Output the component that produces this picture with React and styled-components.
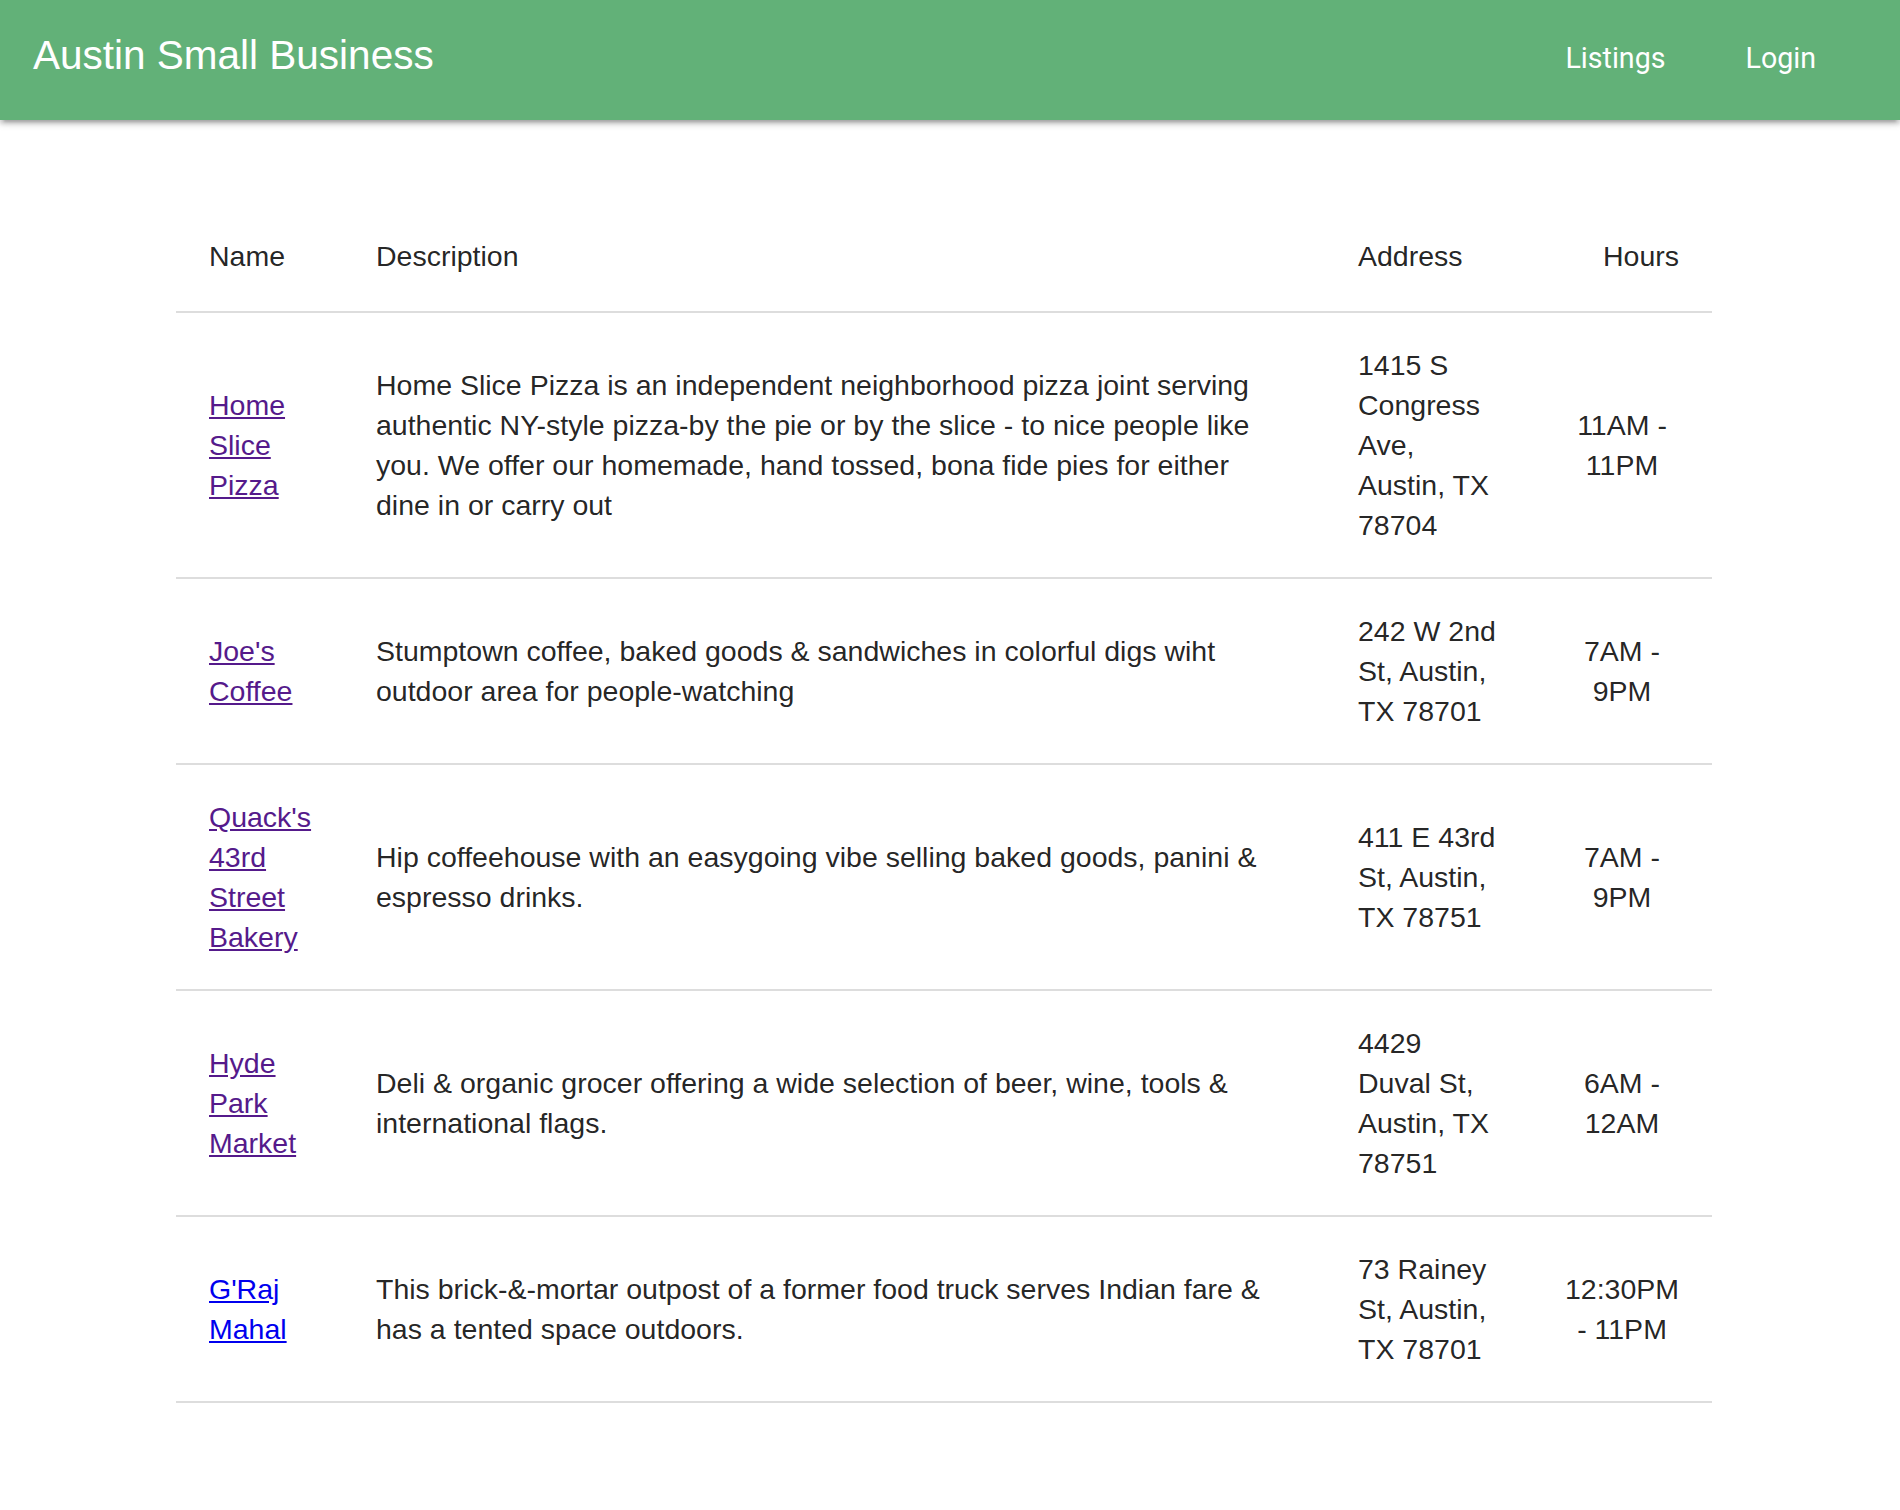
import React from "react";
import styled, { createGlobalStyle } from "styled-components";

const listings = [
  {
    name: "Home Slice Pizza",
    description:
      "Home Slice Pizza is an independent neighborhood pizza joint serving authentic NY-style pizza-by the pie or by the slice - to nice people like you. We offer our homemade, hand tossed, bona fide pies for either dine in or carry out",
    address: "1415 S Congress Ave, Austin, TX 78704",
    hours: "11AM - 11PM",
    visited: true,
  },
  {
    name: "Joe's Coffee",
    description:
      "Stumptown coffee, baked goods & sandwiches in colorful digs wiht outdoor area for people-watching",
    address: "242 W 2nd St, Austin, TX 78701",
    hours: "7AM - 9PM",
    visited: true,
  },
  {
    name: "Quack's 43rd Street Bakery",
    description:
      "Hip coffeehouse with an easygoing vibe selling baked goods, panini & espresso drinks.",
    address: "411 E 43rd St, Austin, TX 78751",
    hours: "7AM - 9PM",
    visited: true,
  },
  {
    name: "Hyde Park Market",
    description:
      "Deli & organic grocer offering a wide selection of beer, wine, tools & international flags.",
    address: "4429 Duval St, Austin, TX 78751",
    hours: "6AM - 12AM",
    visited: true,
  },
  {
    name: "G'Raj Mahal",
    description:
      "This brick-&-mortar outpost of a former food truck serves Indian fare & has a tented space outdoors.",
    address: "73 Rainey St, Austin, TX 78701",
    hours: "12:30PM - 11PM",
    visited: false,
  },
];

const GlobalStyle = createGlobalStyle`
  body {
    margin: 0;
    background: #ffffff;
    font-family: "Liberation Sans", Arial, sans-serif;
    color: rgba(0, 0, 0, 0.87);
  }
`;

const NavBar = styled.nav`
  height: 120px;
  background: #62b178;
  box-shadow: 0 4px 4px 0 rgba(0, 0, 0, 0.14), 0 6px 2px -4px rgba(0, 0, 0, 0.12),
    0 2px 9px 0 rgba(0, 0, 0, 0.2);
  display: flex;
  align-items: center;
  justify-content: space-between;
  padding: 0 44px 0 33px;
  position: relative;
  z-index: 1;
`;

const Brand = styled.a`
  font-family: "Liberation Sans", Arial, sans-serif;
  font-size: 40.5px;
  color: #ffffff;
  text-decoration: none;
  margin-top: -10px;
`;

const NavLinks = styled.ul`
  display: flex;
  list-style: none;
  margin: -4px 0 0;
  padding: 0;
`;

const NavLink = styled.a`
  display: block;
  padding: 0 40px;
  line-height: 120px;
  font-family: Roboto, sans-serif;
  font-size: 28.6px;
  color: #ffffff;
  text-decoration: none;
`;

const Main = styled.main`
  padding: 87px 188px 80px 176px;
`;

const Table = styled.table`
  width: 1536px;
  border-collapse: collapse;
  table-layout: fixed;
  font-size: 28.5px;
  line-height: 40px;
`;

const Col = styled.col`
  width: ${(p) => p.$w}px;
`;

const Row = styled.tr`
  border-bottom: 2px solid #dddddd;
`;

const Head = styled.th`
  font-weight: normal;
  padding: 29px 33px 35px;
  text-align: ${(p) => p.$align || "left"};
  vertical-align: middle;
`;

const Cell = styled.td`
  padding: 32px 33px;
  text-align: ${(p) => p.$align || "left"};
  vertical-align: middle;
`;

const DescCell = styled(Cell)`
  padding-right: 38px;
`;

const NameLink = styled.a`
  color: ${(p) => (p.$visited ? "#551a8b" : "#0000ee")};
  text-decoration: underline;
`;

export default function App() {
  return (
    <>
      <GlobalStyle />
      <NavBar>
        <Brand href="#">Austin Small Business</Brand>
        <NavLinks>
          <li>
            <NavLink href="#">Listings</NavLink>
          </li>
          <li>
            <NavLink href="#">Login</NavLink>
          </li>
        </NavLinks>
      </NavBar>
      <Main>
        <Table>
          <colgroup>
            <Col $w={167} />
            <Col $w={982} />
            <Col $w={207} />
            <Col $w={180} />
          </colgroup>
          <thead>
            <Row>
              <Head>Name</Head>
              <Head>Description</Head>
              <Head>Address</Head>
              <Head $align="right">Hours</Head>
            </Row>
          </thead>
          <tbody>
            {listings.map((item) => (
              <Row key={item.name}>
                <Cell>
                  <NameLink href="#" $visited={item.visited}>
                    {item.name}
                  </NameLink>
                </Cell>
                <DescCell>{item.description}</DescCell>
                <Cell>{item.address}</Cell>
                <Cell $align="center">{item.hours}</Cell>
              </Row>
            ))}
          </tbody>
        </Table>
      </Main>
    </>
  );
}
